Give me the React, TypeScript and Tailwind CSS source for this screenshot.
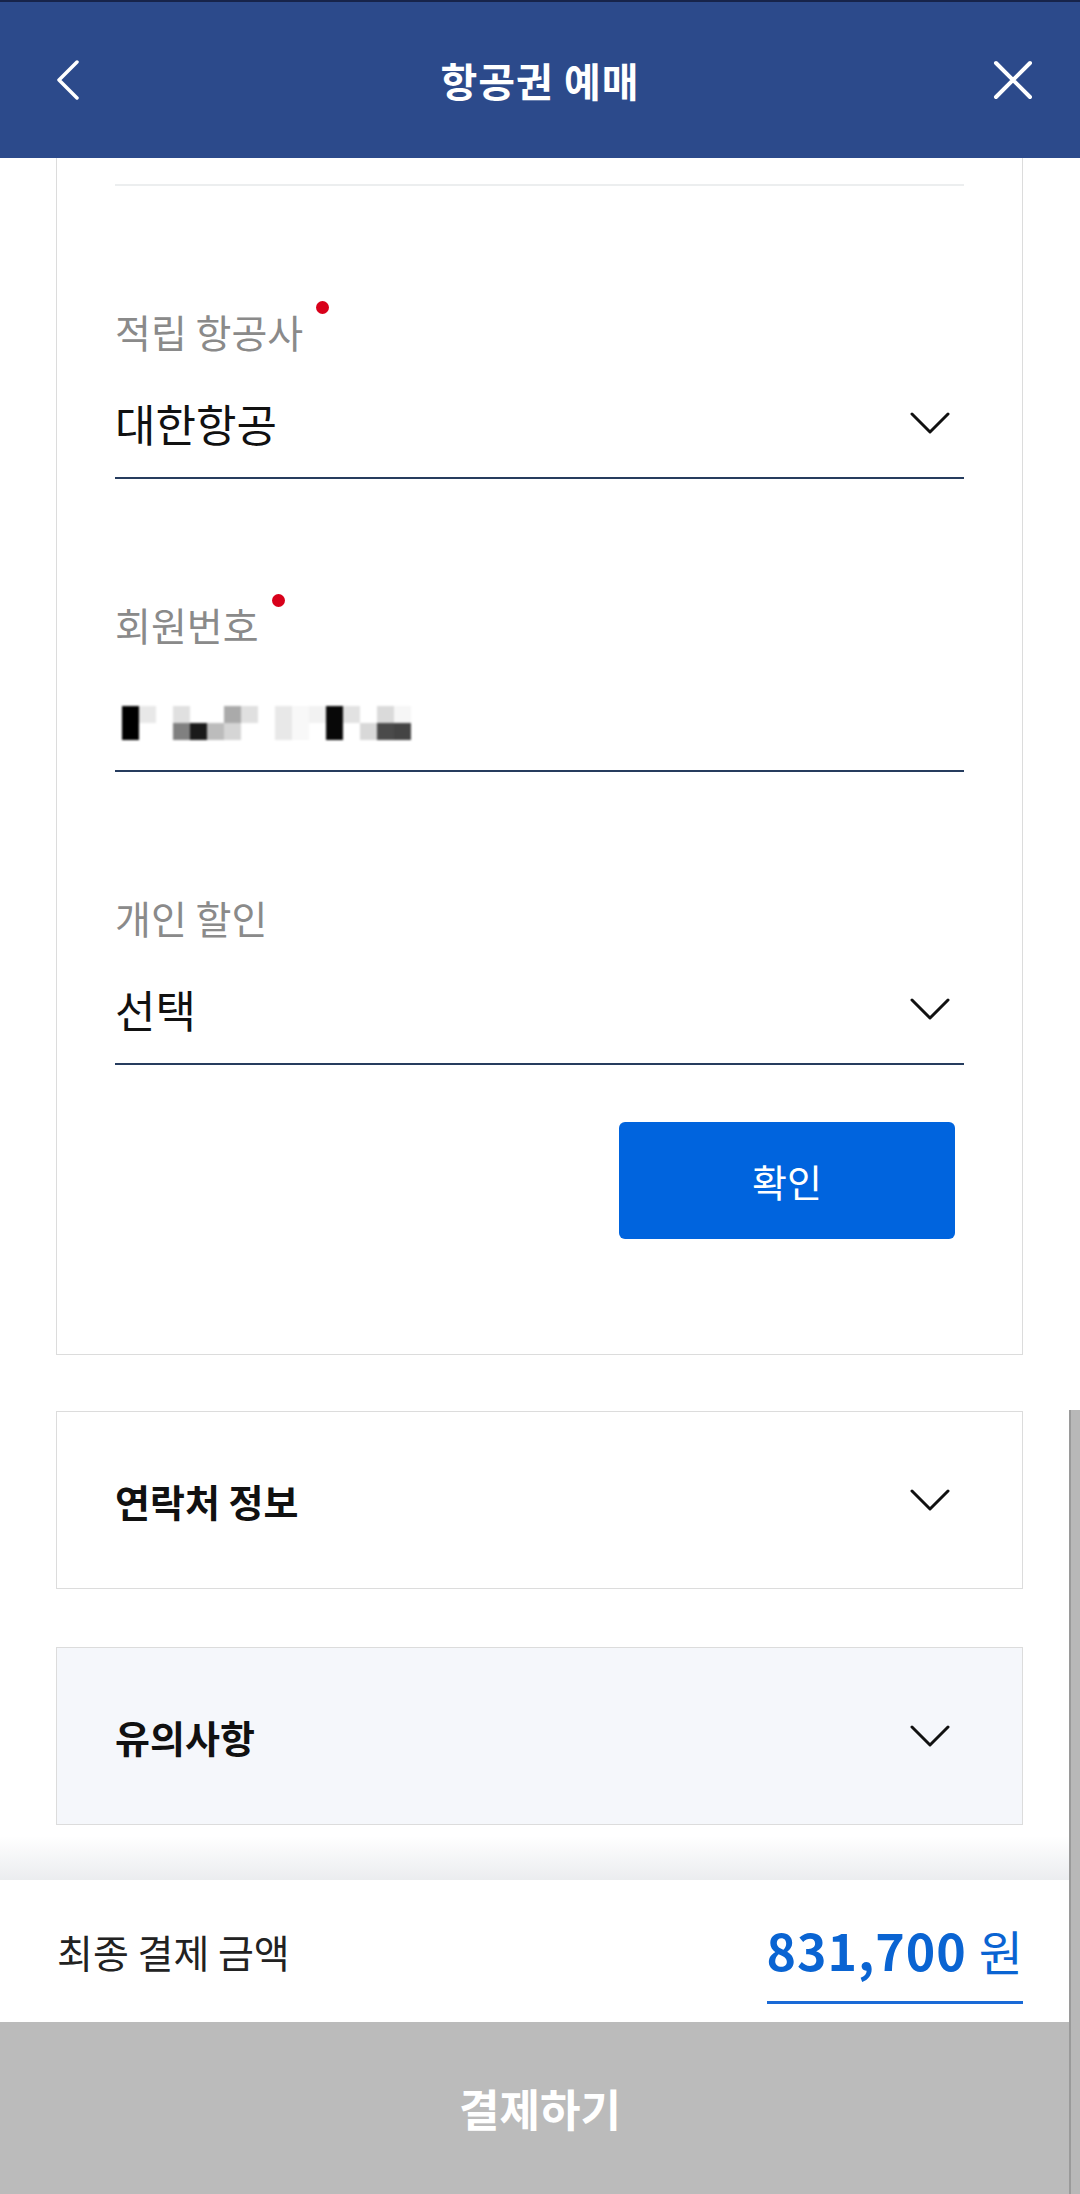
import React from 'react';

const FONT = { fontFamily: '"Noto Sans CJK KR", "Noto Sans", sans-serif' };

// redacted member number, 17 columns x 2 rows of pixel blocks
const BLOCKS: [string, string][] = [
    ['#000000', '#000000'],
    ['#e8e8e8', '#ffffff'],
    ['#ffffff', '#ffffff'],
    ['#e0e0e0', '#808080'],
    ['#ffffff', '#1a1a1a'],
    ['#ffffff', '#bcbcbc'],
    ['#aaaaaa', '#d5d5d5'],
    ['#e0e0e0', '#ffffff'],
    ['#ffffff', '#ffffff'],
    ['#e8e8e8', '#e8e8e8'],
    ['#f8f8f8', '#f8f8f8'],
    ['#f2f2f2', '#ffffff'],
    ['#080808', '#080808'],
    ['#e2e2e2', '#ffffff'],
    ['#ffffff', '#d8d8d8'],
    ['#dadada', '#4a4a4a'],
    ['#f6f6f6', '#444444'],
];

function Chevron() {
    return (
        <svg width="40" height="24" viewBox="0 0 40 24" className="mr-[14px] shrink-0">
            <path d="M2 3 L20 21 L38 3" fill="none" stroke="#111" strokeWidth="3" strokeLinecap="round" strokeLinejoin="round" />
        </svg>
    );
}

function Label({ text, required }: { text: string; required?: boolean }) {
    return (
        <div className="text-[39px] leading-[48px] text-[#8a8a8a]">
            <span className="relative inline-block">
                {text}
                {required && <span className="absolute left-full top-[-6px] ml-[13px] h-[13px] w-[13px] rounded-full bg-[#d8001a]" />}
            </span>
        </div>
    );
}

function SelectField({ label, value, required }: { label: string; value: string; required?: boolean }) {
    return (
        <div className="pt-[121px]">
            <Label text={label} required={required} />
            <div className="mt-[40px] flex h-[84px] items-start justify-between border-b-2 border-[#263c5e]">
                <span className="text-[44px] leading-[56px] text-[#111]">{value}</span>
                <div className="mt-[16px]">
                    <Chevron />
                </div>
            </div>
        </div>
    );
}

export default function App() {
    return (
        <div className="relative flex h-[2194px] w-[1080px] flex-col overflow-hidden bg-white" style={FONT}>
            {/* Header */}
            <div className="flex h-[158px] shrink-0 items-center justify-between border-t-2 border-[#17244a] bg-[#2c4a8b]">
                <div className="flex w-[120px] pl-[56px]">
                    <svg width="24" height="40" viewBox="0 0 24 40">
                        <path d="M21 2 L3 20 L21 38" fill="none" stroke="#fff" strokeWidth="3.5" strokeLinecap="round" strokeLinejoin="round" />
                    </svg>
                </div>
                <div className="text-[40px] font-bold tracking-[1px] text-white">항공권 예매</div>
                <div className="flex w-[120px] justify-end pr-[47px]">
                    <svg width="40" height="40" viewBox="0 0 40 40">
                        <path d="M3 3 L37 37 M37 3 L3 37" fill="none" stroke="#fff" strokeWidth="4" strokeLinecap="round" />
                    </svg>
                </div>
            </div>

            {/* Content */}
            <div className="flex-1 overflow-hidden px-[56px] pr-[57px]">
                <div className="border border-t-0 border-[#dcdcdc] px-[58px] pb-[115px] pt-[26px]">
                    <div className="h-[2px] bg-[#eceeef]" />

                    <SelectField label="적립 항공사" value="대한항공" required />

                    <div className="pt-[121px]">
                        <Label text="회원번호" required />
                        <div className="mt-[40px] flex h-[84px] items-start border-b-2 border-[#263c5e]">
                            <svg width="289" height="34" viewBox="0 0 289 34" className="ml-[7px] mt-[18px] blur-[0.8px]">
                                {BLOCKS.map((b, i) => (
                                    <g key={i}>
                                        <rect x={i * 17} y="0" width="17" height="17" fill={b[0]} />
                                        <rect x={i * 17} y="17" width="17" height="17" fill={b[1]} />
                                    </g>
                                ))}
                            </svg>
                        </div>
                    </div>

                    <SelectField label="개인 할인" value="선택" />

                    <div className="mt-[57px] flex justify-end pr-[9px]">
                        <button className="h-[117px] w-[336px] rounded-[6px] bg-[#0064de] text-[38px] text-white">확인</button>
                    </div>
                </div>

                <div className="mt-[56px] flex h-[178px] items-center justify-between border border-[#dcdcdc] pl-[58px] pr-[58px]">
                    <span className="text-[38px] font-bold text-[#111]">연락처 정보</span>
                    <Chevron />
                </div>

                <div className="mt-[58px] flex h-[178px] items-center justify-between border border-[#dcdcdc] bg-[#f5f7fb] pl-[58px] pr-[58px]">
                    <span className="text-[38px] font-bold text-[#111]">유의사항</span>
                    <Chevron />
                </div>
            </div>

            {/* Footer */}
            <div className="relative shrink-0">
                <div className="absolute bottom-full left-0 right-0 h-[44px] bg-gradient-to-t from-[rgba(30,50,80,0.09)] to-transparent" />
                <div className="flex h-[142px] items-center justify-between bg-white pl-[57px] pr-[57px]">
                    <span className="text-[39px] text-[#222]">최종 결제 금액</span>
                    <div className="mt-[40px] self-start border-b-[3px] border-[#1a6ad6] pb-[8px] leading-[58px] text-[#0a64d2]">
                        <span className="text-[50px] font-bold tracking-[1px]">831,700</span>
                        <span className="ml-[12px] text-[48px]">원</span>
                    </div>
                </div>
                <div className="flex h-[172px] items-center justify-center bg-[#bbbbbb] text-[44px] font-bold text-white">결제하기</div>
            </div>

            {/* Scrollbar thumb */}
            <div className="absolute bottom-0 right-0 top-[1410px] w-[11px] border-l-2 border-[#9a9a9a] bg-[#b8b8b8]" />
        </div>
    );
}
